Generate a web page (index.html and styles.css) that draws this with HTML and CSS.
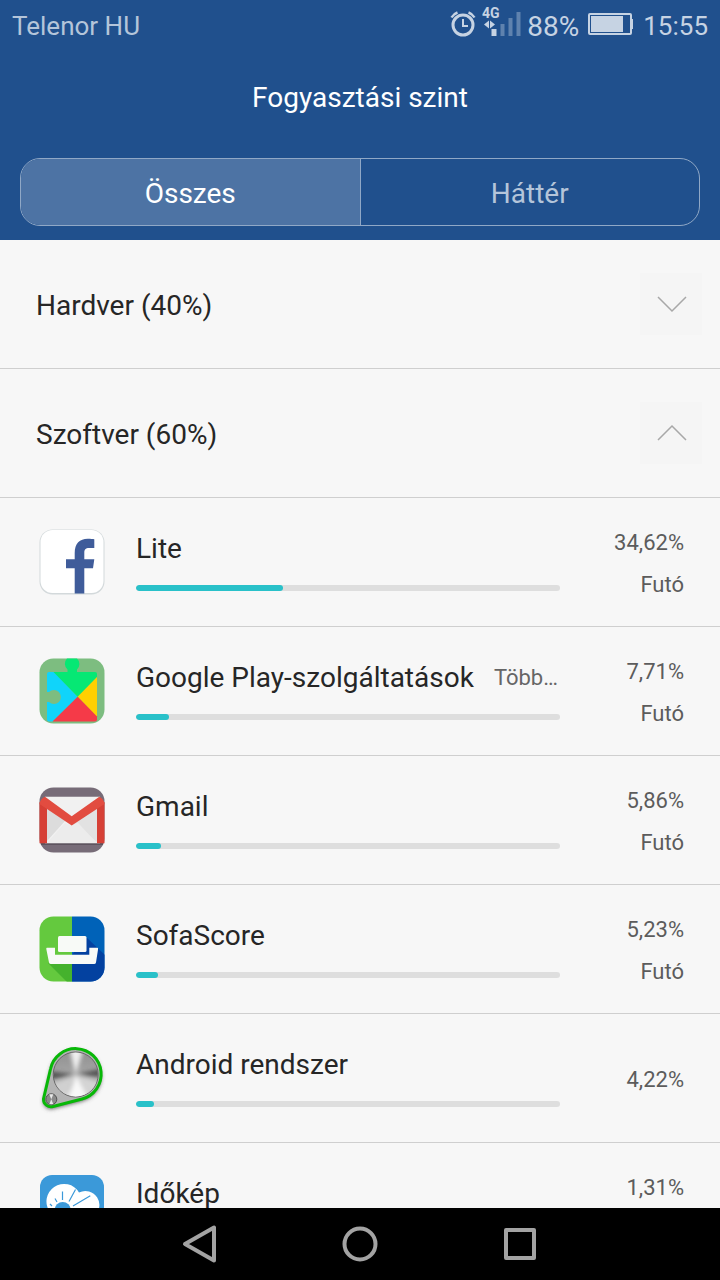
FILE: index.html
```html
<!DOCTYPE html>
<html lang="hu">

<head>
  <meta charset="UTF-8">
  <meta name="viewport" content="width=device-width, initial-scale=1.0">
  <title>Fogyasztási szint</title>
  <link rel="stylesheet" href="styles.css">
</head>

<body>

  <header>
    <div class="status-bar">
      <span class="carrier">Telenor HU</span>
      <svg class="alarm" width="28" height="30" viewBox="0 1 28 30" fill="none" stroke="#c6d3e3" stroke-width="3">
        <circle cx="14" cy="16" r="10" />
        <path d="M14 10v7h5" stroke-width="2" />
        <path d="M2.500 8.500Q4.500 5 8.500 3.500M25.500 8.500Q23.500 5 19.500 3.500" stroke-width="2.500" />
      </svg>
      <svg class="signal" width="40" height="40" viewBox="0 -4 40 40">
        <text x="0" y="9" class="net-type">4G</text>
        <path d="M2 15.500l5-4v8zM13 15.500l-5-4v8zM9.500 20h5v7h-5z" fill="#c6d3e3" />
        <path d="M18.500 15h4v12h-4zM26.500 9h4v18h-4zM34.500 3h4v24h-4z" fill="#5f82ae" />
      </svg>
      <span class="charge">88%</span>
      <svg class="battery" width="46" height="24" viewBox="0 0 46 24">
        <rect x="1" y="1" width="42" height="20" rx="1" fill="none" stroke="#c6d3e3" stroke-width="2" />
        <path d="M3 3h32v16H3zM43 6h2v10h-2z" fill="#c6d3e3" />
      </svg>
      <span class="clock">15:55</span>
    </div>

    <h1>Fogyasztási szint</h1>

    <div class="tabs" role="tablist">
      <button class="active" role="tab" aria-selected="true">Összes</button>
      <button role="tab" aria-selected="false">Háttér</button>
    </div>
  </header>

  <main>
    <button class="group" aria-expanded="false">
      <span>Hardver (40%)</span>
      <svg width="62" height="62" viewBox="0 0 62 62">
        <path d="M18 24l14 14 14-14" />
      </svg>
    </button>
    <button class="group" aria-expanded="true">
      <span>Szoftver (60%)</span>
      <svg width="62" height="62" viewBox="0 0 62 62">
        <path d="M18 38l14-14 14 14" />
      </svg>
    </button>

    <ul class="app-list">
      <li class="app">
        <!-- Lite -->
        <svg class="app-icon" viewBox="0 0 72 72">
          <rect x="3.500" y="3.500" width="65" height="65" rx="13" fill="#d3d9db" />
          <rect x="4.500" y="4" width="63" height="63" rx="12" fill="#fff" />
          <path d="M38.700 67.500V42.300H30v-9h8.700V27c0-9.500 5-14.300 13-14.300 3 0 5 .2 6.600.5V22h-5c-4 0-5 1.700-5 5v6.300h10l-1.300 9h-8.700v25.200z" fill="#3f5c9a" />
        </svg>
        <div class="app-info">
          <div class="app-title"><span class="name">Lite</span></div>
          <div class="bar"><div class="fill" style="width: 34.62%"></div></div>
        </div>
        <div class="usage"><span>34,62%</span><span>Futó</span></div>
      </li>

      <li class="app">
        <!-- Play -->
        <svg class="app-icon" viewBox="0 0 72 72">
          <rect x="3.500" y="3.500" width="65" height="65" rx="14" fill="#7dbd80" />
          <path d="M13 17h5l23.700 24.700L16.700 66.500H13a2 2 0 0 1-2-2V19a2 2 0 0 1 2-2z" fill="#10d4fa" />
          <path d="M17.500 17h14V14.500A7.500 7.500 0 0 1 31 3.500h10a7.500 7.500 0 0 1 0 11V17h18a2 2 0 0 1 2 2v3.300L41.700 41.700z" fill="#06e874" />
          <path d="M61 22v40L41.700 41.700z" fill="#ffd000" />
          <path d="M41.700 41.700L61 61.500v3a2 2 0 0 1-2 2H16.500z" fill="#f53a48" />
          <path d="M11 37h2a7 7 0 1 1 0 10h-2z" fill="#7dbd80" />
        </svg>
        <div class="app-info">
          <div class="app-title"><span class="name">Google Play-szolgáltatások</span><span class="note">Több…</span></div>
          <div class="bar"><div class="fill" style="width: 7.71%"></div></div>
        </div>
        <div class="usage"><span>7,71%</span><span>Futó</span></div>
      </li>

      <li class="app">
        <!-- Gmail -->
        <svg class="app-icon" viewBox="0 0 72 72">
          <rect x="3.500" y="3.500" width="65" height="65" rx="14" fill="#776c78" />
          <path d="M5 59h62v2H5z" fill="#5e545f" />
          <path d="M9 12.700h55v46.600H9z" fill="#f1f1f1" />
          <path d="M11 20l18 17-18 20z" fill="#dcdcdc" />
          <path d="M35.700 40L61 20v38z" fill="#e2e2e2" />
          <path d="M11 59l18-20 6.700 2.500 6-3L61 59z" fill="#ececec" />
          <path d="M3.500 18L11 23v36.300H3.500zM68.500 18L61 23v36.300h7.500z" fill="#d64036" />
          <path d="M9 12.700l26.700 19.600 27.600-19.600q4.500 2 5.200 7.300L35.700 41.500 3.500 20Q4 15 9 12.700z" fill="#e24c40" />
        </svg>
        <div class="app-info">
          <div class="app-title"><span class="name">Gmail</span></div>
          <div class="bar"><div class="fill" style="width: 5.86%"></div></div>
        </div>
        <div class="usage"><span>5,86%</span><span>Futó</span></div>
      </li>

      <li class="app">
        <!-- SofaScore -->
        <svg class="app-icon" viewBox="0 0 72 72">
          <clipPath id="sofaClip"><rect x="3.500" y="3.500" width="65" height="65" rx="14" /></clipPath>
          <g clip-path="url(#sofaClip)">
            <path d="M0 0h36v72H0z" fill="#64c93e" />
            <path d="M36 0h36v72H36z" fill="#0062b8" />
            <path d="M12 50l19 19h5V50z" fill="#45b22d" />
            <path d="M50 24l20 19v29H36V42z" fill="#0341a0" />
          </g>
          <rect x="22" y="23" width="28.500" height="16" rx="1.500" fill="#f8faf7" />
          <path d="M11 34.700h8v7h34.300v-7h8q1 0 .8 1.200L60 49.500q-.3 1.500-2 1.500H15q-1.700 0-2-1.500L10.300 36q-.2-1.300.7-1.300z" fill="#f8faf7" />
        </svg>
        <div class="app-info">
          <div class="app-title"><span class="name">SofaScore</span></div>
          <div class="bar"><div class="fill" style="width: 5.23%"></div></div>
        </div>
        <div class="usage"><span>5,23%</span><span>Futó</span></div>
      </li>

      <li class="app">
        <!-- Android -->
        <svg class="app-icon" viewBox="0 0 72 72">
          <defs>
            <filter id="soft" x="-20%" y="-20%" width="140%" height="140%"><feGaussianBlur stdDeviation="2" /></filter>
            <linearGradient id="metal" x1="0" y1="0" x2="0" y2="1">
              <stop offset="0" stop-color="#909090" />
              <stop offset="0.550" stop-color="#a8a8a8" />
              <stop offset="1" stop-color="#e2e2e2" />
            </linearGradient>
            <clipPath id="knob"><circle cx="39.700" cy="32.500" r="22" /></clipPath>
          </defs>
          <path d="M14.500 27A25.600 25.600 0 1 1 46 57L17 64.500A7.500 7.500 0 0 1 7.500 57z" transform="translate(0 2)" fill="#555" filter="url(#soft)" />
          <path d="M14.500 27A25.600 25.600 0 1 1 46 57L17 64.500A7.500 7.500 0 0 1 7.500 57z" fill="#b4b4b4" stroke="#08b808" stroke-width="3" />
          <circle cx="39.700" cy="32.500" r="22.500" fill="url(#metal)" stroke="#666" stroke-width="1" />
          <g clip-path="url(#knob)">
            <g filter="url(#soft)">
              <path d="M39.700 32.500L10 29v9zM39.700 32.500L69 26v9z" fill="#505050" />
              <path d="M39.700 32.500L33 5h15z" fill="#efefef" />
              <path d="M39.700 32.500L31 62h24z" fill="#f8f8f8" />
              <path d="M39.700 32.500L14 44l14 14z" fill="#d0d0d0" />
              <path d="M39.700 32.500L67 42 53 56z" fill="#d4d4d4" />
            </g>
          </g>
          <circle cx="15.300" cy="57.300" r="5.500" fill="#8a8a8a" stroke="#505050" />
          <path d="M15.300 57.300l-2-5h4zM15.300 57.300l-2 5h4z" fill="#e8e8e8" />
        </svg>
        <div class="app-info">
          <div class="app-title"><span class="name">Android rendszer</span></div>
          <div class="bar"><div class="fill" style="width: 4.22%"></div></div>
        </div>
        <div class="usage"><span>4,22%</span></div>
      </li>

      <li class="app">
        <!-- Időkép -->
        <svg class="app-icon" viewBox="0 0 72 72">
          <rect x="4" y="4" width="64" height="64" rx="12" fill="#3b99d9" />
          <path d="M14 41A17.500 17.500 0 1 1 43 21.500A14 14 0 0 1 58 45L52 50H18z" fill="#fff" />
          <circle cx="26.700" cy="39" r="8" fill="#3b99d9" />
          <path d="M26.500 20.500V29M39.500 18.500L33 30.500M54.300 24.700L37 35M19 27.500l2 3.500M14 33l2 2" stroke="#3b99d9" stroke-width="1.200" />
        </svg>
        <div class="app-info">
          <div class="app-title"><span class="name">Időkép</span></div>
          <div class="bar"><div class="fill" style="width: 1.31%"></div></div>
        </div>
        <div class="usage"><span>1,31%</span><span>Futó</span></div>
      </li>
    </ul>
  </main>

  <nav>
    <button aria-label="Vissza">
      <svg width="40" height="40" viewBox="0 0 40 40"><path d="M5 20L34 3.500v33z" /></svg>
    </button>
    <button aria-label="Kezdőképernyő">
      <svg width="40" height="40" viewBox="0 0 40 40"><circle cx="20" cy="20" r="15.500" /></svg>
    </button>
    <button aria-label="Legutóbbiak">
      <svg width="40" height="40" viewBox="0 0 40 40"><rect x="6" y="6" width="28" height="28" /></svg>
    </button>
  </nav>

</body>

</html>
```
FILE: styles.css
```css
* {
  box-sizing: border-box;
}

body {
  font-family: Roboto, "Noto Sans", sans-serif;
  margin: 0;
  height: 100vh;
  display: flex;
  flex-direction: column;
  background: #f7f7f7;
  color: #262626;
  font-size: 28px;
}

button {
  font: inherit;
  color: inherit;
  background: none;
  border: none;
  padding: 0;
  cursor: pointer;
}

svg {
  display: block;
  flex: none;
}

header {
  flex: none;
  background: #20508d;
  color: white;
  padding-bottom: 14px;
}

.status-bar {
  display: flex;
  align-items: center;
  height: 50px;
  padding: 0 12px;
  font-size: 26px;
  color: #c6d3e3;
}

.status-bar span {
  padding-top: 2px;
}

.carrier {
  flex: 1;
  color: #b4c5da;
}

.signal {
  margin: 0 5px;
}

.net-type {
  font-size: 14px;
  font-weight: bold;
  fill: #c6d3e3;
}

.charge {
  font-size: 28px;
}

.battery {
  margin: 0 9px;
}

h1 {
  margin: 0;
  padding: 24px 0 36px;
  font-size: 28px;
  font-weight: normal;
  line-height: 48px;
  text-align: center;
}

.tabs {
  display: flex;
  height: 68px;
  margin: 0 20px;
  border: 1px solid #90a8c6;
  border-radius: 20px;
  overflow: hidden;
}

.tabs button {
  flex: 1;
  padding-top: 2px;
  color: #b4c5da;
}

.tabs .active {
  background: #4d73a4;
  border-right: 1px solid #90a8c6;
  color: white;
}

main {
  flex: 1;
  min-height: 0;
  overflow-y: auto;
  scrollbar-width: none;
}

.group {
  display: flex;
  align-items: center;
  justify-content: space-between;
  width: 100%;
  height: 129px;
  padding: 0 18px 0 36px;
  border-bottom: 1px solid #cfcfcf;
}

.group span {
  padding-top: 2px;
}

.group svg {
  background: #f5f5f5;
  fill: none;
  stroke: #a8a8a8;
  stroke-width: 1.5;
}

.app-list {
  list-style: none;
  margin: 0;
  padding: 0;
}

.app {
  display: flex;
  align-items: center;
  height: 129px;
  padding: 0 36px;
  border-bottom: 1px solid #cfcfcf;
}

.app-icon {
  width: 72px;
  height: 72px;
}

.app-info {
  flex: 1;
  min-width: 0;
  margin-left: 28px;
}

.app-title {
  display: flex;
  align-items: center;
  gap: 20px;
  line-height: 36px;
  margin-bottom: 18px;
  white-space: nowrap;
}

.note {
  font-size: 22px;
  color: #666;
}

.bar {
  height: 6px;
  margin-bottom: 2px;
  border-radius: 3px;
  background: #dedede;
  overflow: hidden;
}

.fill {
  height: 100%;
  border-radius: 3px;
  background: #29c1c9;
}

.usage {
  display: flex;
  flex-direction: column;
  width: 124px;
  padding-top: 4px;
  font-size: 22px;
  line-height: 42px;
  text-align: right;
  color: #5c5c5c;
}

nav {
  flex: none;
  display: flex;
  justify-content: center;
  height: 72px;
  background: black;
}

nav button {
  display: flex;
  align-items: center;
  justify-content: center;
  width: 160px;
}

nav svg {
  fill: none;
  stroke: #a3a3a3;
  stroke-width: 4;
  stroke-linejoin: round;
}
```
